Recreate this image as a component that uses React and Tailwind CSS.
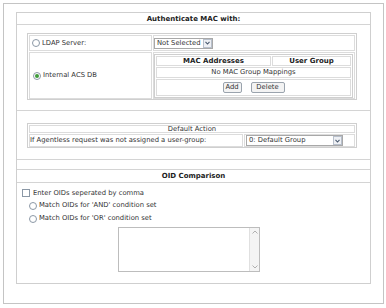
import React from "react";

function Radio({ checked }) {
  return (
    <span className="relative inline-block w-[8px] h-[8px] rounded-full border border-[#8b98a6] bg-white shrink-0">
      {checked && <span className="absolute left-[1px] top-[1px] w-[4px] h-[4px] rounded-full bg-[#3f9b3a]" />}
    </span>
  );
}

function Select({ text, w }) {
  return (
    <div className={`flex items-center h-[11px] border border-[#a8a8a8] bg-white ${w}`}>
      <span className="flex-1 pl-[2px] leading-none text-[#333]">{text}</span>
      <span className="flex items-center justify-center w-[9px] h-[9px] border border-[#b8c0cc] bg-[#eef0f4]">
        <svg width="5" height="4" viewBox="0 0 5 4"><path d="M0.5 0.8 L2.5 3 L4.5 0.8" fill="none" stroke="#4a5a70" strokeWidth="1.1" /></svg>
      </span>
    </div>
  );
}

function Btn({ children, w }) {
  return (
    <span className={`flex items-center justify-center h-[11px] border border-[#9aa3ad] rounded-[2px] bg-[#f3f3f3] text-[#333] leading-none ${w}`}>
      {children}
    </span>
  );
}

export default function App() {
  return (
    <div className="w-[386px] h-[308px] bg-white font-['DejaVu_Sans',sans-serif] text-[6.8px] text-[#333] overflow-hidden pt-[3px] pl-[3px]">
      <div className="w-[381px] h-[301px] border border-[#c4c4c4] pt-[8px] pl-[12px]">
        <div className="w-[355px] h-[272px] border border-[#cfcfcf] flex flex-col">
          <div className="h-[12px] border-b border-[#d4d4d4] flex items-center justify-center font-bold text-[#222] text-[7px] pt-[1px]">
            Authenticate MAC with:
          </div>
          <div className="h-[86px] border-b border-[#d4d4d4] pl-[10px] pt-[8px]">
            <div className="w-[330px] h-[67px] border border-[#cfcfcf] p-[1px] grid grid-cols-[123px_1fr] grid-rows-[16px_1fr] gap-[1px]">
              <div className="border border-[#dcdcdc] flex items-center gap-[2px] pl-[2px]">
                <Radio />
                <span>LDAP Server:</span>
              </div>
              <div className="border border-[#dcdcdc] flex items-center">
                <Select text="Not Selected" w="w-[59px]" />
              </div>
              <div className="border border-[#dcdcdc] flex items-center gap-[2px] pl-[3px]">
                <Radio checked />
                <span>Internal ACS DB</span>
              </div>
              <div className="border border-[#dcdcdc] pt-[1px]">
                <div className="w-[199px] h-[44px] border border-[#cfcfcf] p-[1px] grid grid-cols-[115px_1fr] grid-rows-[10px_11px_1fr] gap-[1px]">
                  <div className="border border-[#dcdcdc] flex items-center justify-center font-bold text-[#222] text-[7px]">MAC Addresses</div>
                  <div className="border border-[#dcdcdc] flex items-center justify-center font-bold text-[#222] text-[7px]">User Group</div>
                  <div className="col-span-2 border border-[#dcdcdc] flex items-center justify-center">No MAC Group Mappings</div>
                  <div className="col-span-2 border border-[#dcdcdc] flex items-center justify-center gap-[9px]">
                    <Btn w="w-[19px]">Add</Btn>
                    <Btn w="w-[34px]">Delete</Btn>
                  </div>
                </div>
              </div>
            </div>
          </div>
          <div className="h-[49px] border-b border-[#d4d4d4] pl-[10px] pt-[12px]">
            <div className="w-[330px] h-[25px] border border-[#cfcfcf] p-[1px] grid grid-cols-[214px_1fr] grid-rows-[8px_1fr] gap-[1px]">
              <div className="col-span-2 border border-[#dcdcdc] flex items-center justify-center">Default Action</div>
              <div className="border border-[#dcdcdc] flex items-center pl-[0px]">If Agentless request was not assigned a user-group:</div>
              <div className="border border-[#dcdcdc] flex items-center pl-[1px]">
                <Select text="0: Default Group" w="w-[97px]" />
              </div>
            </div>
          </div>
          <div className="h-[10px] border-b border-[#d4d4d4]" />
          <div className="h-[13px] border-b border-[#d4d4d4] flex items-center justify-center font-bold text-[#222] text-[7px]">
            OID Comparison
          </div>
          <div className="flex-1 flex flex-col pt-[4px]">
            <div className="h-[12px] flex items-center gap-[3px] pl-[5px]">
              <span className="inline-block w-[8px] h-[8px] border border-[#8b98a6] bg-white" />
              <span>Enter OIDs seperated by comma</span>
            </div>
            <div className="h-[13px] flex items-center gap-[2px] pl-[12px]">
              <Radio />
              <span>Match OIDs for 'AND' condition set</span>
            </div>
            <div className="h-[13px] flex items-center gap-[2px] pl-[12px]">
              <Radio />
              <span>Match OIDs for 'OR' condition set</span>
            </div>
            <div className="pl-[101px] pt-[2px]">
              <div className="w-[142px] h-[45px] border border-[#bdbdbd] bg-white flex justify-end">
                <div className="w-[10px] h-full border-l border-[#e0e0e0] bg-[#f4f4f4] flex flex-col justify-between items-center py-[2px]">
                  <svg width="6" height="4" viewBox="0 0 6 4"><path d="M0.5 3.5 L3 1 L5.5 3.5" fill="none" stroke="#b0b0b0" strokeWidth="1" /></svg>
                  <svg width="6" height="4" viewBox="0 0 6 4"><path d="M0.5 0.5 L3 3 L5.5 0.5" fill="none" stroke="#b0b0b0" strokeWidth="1" /></svg>
                </div>
              </div>
            </div>
          </div>
        </div>
      </div>
    </div>
  );
}
